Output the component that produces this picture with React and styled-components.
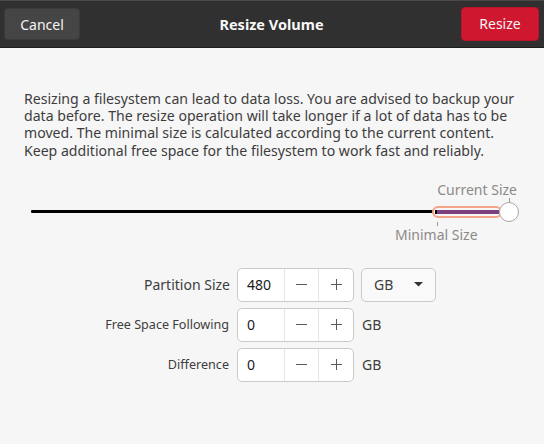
import React from "react";
import styled, { createGlobalStyle } from "styled-components";

const FONT = `"Noto Sans", "Open Sans", "DejaVu Sans", sans-serif`;

const Global = createGlobalStyle`
  html, body {
    margin: 0;
    padding: 0;
    background: #f6f6f6;
    font-family: ${FONT};
    color: #3d3d3d;
  }
  body { width: 544px; height: 444px; overflow: hidden; }
  * { box-sizing: border-box; }
`;

const Window = styled.div`
  width: 544px;
  height: 444px;
  display: flex;
  flex-direction: column;
  background: #f6f6f6;
`;

const HeaderBar = styled.header`
  height: 48px;
  flex: none;
  background: #303030;
  border-top: 1px solid #4a4848;
  border-bottom: 1px solid #1d1d1d;
  display: grid;
  grid-template-columns: 1fr auto 1fr;
  align-items: center;
  padding: 0 5px 0 4px;
`;

const HeaderButton = styled.button`
  border-radius: 4px;
  font-family: ${FONT};
  font-size: 14px;
  color: #f4f4f4;
  cursor: pointer;
  background: ${(p) => (p.$primary ? "#d01730" : "#464545")};
  border: 1px solid ${(p) => (p.$primary ? "#b8132a" : "#3c3b3b")};
  width: ${(p) => p.$w}px;
  justify-self: ${(p) => (p.$primary ? "end" : "start")};
  margin-top: ${(p) => (p.$primary ? "-1px" : "0")};
  height: ${(p) => (p.$primary ? "34px" : "32px")};
  padding: 0;
`;

const Title = styled.h1`
  margin: 0;
  font-size: 14.5px;
  font-weight: 700;
  color: #f7f7f7;
`;

const Body = styled.main`
  flex: 1;
  display: flex;
  flex-direction: column;
  padding: 42px 0 0 0;
`;

const Paragraph = styled.p`
  margin: 0 0 0 24px;
  font-size: 14.1px;
  line-height: 17.2px;
  color: #3d3d3d;
  white-space: nowrap;
`;

const Slider = styled.section`
  display: flex;
  flex-direction: column;
  margin-top: 23px;
`;

const MarkLabelRow = styled.div`
  display: flex;
  justify-content: ${(p) => p.$justify};
  padding: ${(p) => p.$pad};
  height: ${(p) => p.$h}px;
  align-items: center;
`;

const MarkLabel = styled.span`
  font-size: 14px;
  color: #8c8a88;
  line-height: 16px;
`;

const TickRow = styled.div`
  display: flex;
  height: ${(p) => p.$h}px;
  padding-left: ${(p) => p.$x}px;
`;

const Tick = styled.span`
  width: 1px;
  height: 100%;
  background: #9a9896;
`;

const Track = styled.div`
  display: flex;
  align-items: center;
  height: 20px;
  padding-left: 31px;
`;

const Fill = styled.div`
  flex: 1;
  height: 3px;
  background: #000;
  border-radius: 1px;
`;

const Range = styled.div`
  width: 70px;
  height: 12px;
  margin-left: -2px;
  border: 2px solid #f3a488;
  border-radius: 6px;
  background: #f6f6f6;
  padding: 2px 1px;
  display: flex;
`;

const RangeFill = styled.span`
  flex: 1;
  background: #7b3f7e;
  border-left: 2px solid #000;
`;

const Knob = styled.div`
  width: 20px;
  height: 20px;
  margin-left: -3px;
  margin-right: 25px;
  border-radius: 50%;
  background: #ffffff;
  border: 1px solid #a9a6a3;
  flex: none;
`;

const Form = styled.div`
  display: grid;
  grid-template-columns: 230px 117px auto;
  grid-auto-rows: 34px;
  column-gap: 7px;
  row-gap: 6px;
  align-items: center;
  margin-top: 24px;
`;

const FieldLabel = styled.label`
  justify-self: end;
  font-size: ${(p) => (p.$big ? "14px" : "12.6px")};
  color: #3d3d3d;
  margin-right: ${(p) => (p.$big ? "0" : "1px")};
`;

const Spin = styled.div`
  height: 34px;
  display: flex;
  background: #ffffff;
  border: 1px solid #cdc9c5;
  border-radius: 5px;
  overflow: hidden;
`;

const SpinValue = styled.div`
  width: 46px;
  display: flex;
  align-items: center;
  padding-left: 9px;
  font-size: 14px;
  color: #202020;
`;

const SpinButton = styled.div`
  width: 35px;
  border-left: 1px solid #e8e6e4;
  display: flex;
  align-items: center;
  justify-content: center;
`;

const Dropdown = styled.div`
  width: 75px;
  height: 34px;
  border: 1px solid #cdc9c5;
  border-radius: 5px;
  background: #f9f9f9;
  display: flex;
  align-items: center;
  justify-content: space-between;
  padding: 0 12px 0 12px;
  font-size: 14px;
  color: #3d3d3d;
`;

const Unit = styled.span`
  font-size: 14px;
  color: #3d3d3d;
  margin-left: 1px;
`;

const Minus = () => (
  <svg width="11" height="11" viewBox="0 0 11 11">
    <rect x="0" y="5" width="11" height="1" fill="#5a5856" />
  </svg>
);

const Plus = () => (
  <svg width="11" height="11" viewBox="0 0 11 11">
    <rect x="0" y="5" width="11" height="1" fill="#5a5856" />
    <rect x="5" y="0" width="1" height="11" fill="#5a5856" />
  </svg>
);

const Caret = () => (
  <svg width="9" height="5" viewBox="0 0 9 5">
    <polygon points="0,0 9,0 4.5,4.5" fill="#333" />
  </svg>
);

const SpinBox = ({ value }) => (
  <Spin>
    <SpinValue>{value}</SpinValue>
    <SpinButton><Minus /></SpinButton>
    <SpinButton><Plus /></SpinButton>
  </Spin>
);

export default function App() {
  return (
    <Window>
      <Global />
      <HeaderBar>
        <HeaderButton $w={76}>Cancel</HeaderButton>
        <Title>Resize Volume</Title>
        <HeaderButton $primary $w={78}>Resize</HeaderButton>
      </HeaderBar>
      <Body>
        <Paragraph>
          Resizing a filesystem can lead to data loss. You are advised to backup your
          <br />
          data before. The resize operation will take longer if a lot of data has to be
          <br />
          moved. The minimal size is calculated according to the current content.
          <br />
          Keep additional free space for the filesystem to work fast and reliably.
        </Paragraph>
        <Slider>
          <MarkLabelRow $justify="flex-end" $pad="0 27px 0 0" $h={16}>
            <MarkLabel>Current Size</MarkLabel>
          </MarkLabelRow>
          <TickRow $h={4} $x={509}><Tick /></TickRow>
          <Track>
            <Fill />
            <Range><RangeFill /></Range>
            <Knob />
          </Track>
          <TickRow $h={4} $x={437}><Tick /></TickRow>
          <MarkLabelRow $justify="flex-start" $pad="0 0 0 395px" $h={18}>
            <MarkLabel>Minimal Size</MarkLabel>
          </MarkLabelRow>
        </Slider>
        <Form>
          <FieldLabel $big>Partition Size</FieldLabel>
          <SpinBox value="480" />
          <Dropdown>
            <span>GB</span>
            <Caret />
          </Dropdown>
          <FieldLabel>Free Space Following</FieldLabel>
          <SpinBox value="0" />
          <Unit>GB</Unit>
          <FieldLabel>Difference</FieldLabel>
          <SpinBox value="0" />
          <Unit>GB</Unit>
        </Form>
      </Body>
    </Window>
  );
}
